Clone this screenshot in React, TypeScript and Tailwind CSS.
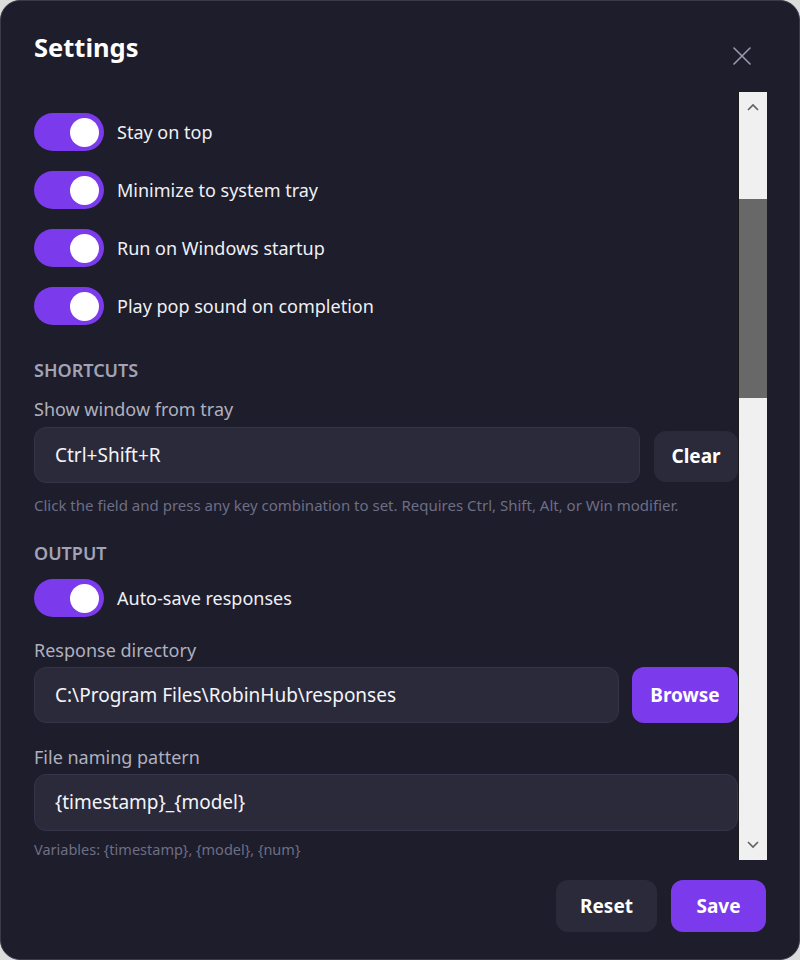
import React from "react";

const font = { fontFamily: '"Noto Sans", "Open Sans", sans-serif' };

function Toggle() {
  return (
    <div className="w-[70px] h-[38px] rounded-full bg-[#7c3aed] flex items-center justify-end pr-[5px] shrink-0">
      <div className="w-[29px] h-[29px] rounded-full bg-white" />
    </div>
  );
}

function ToggleRow({ label }: { label: string }) {
  return (
    <div className="flex items-center gap-[13px]">
      <Toggle />
      <span className="text-[18px] text-[#f0f0f4] leading-[24px]">{label}</span>
    </div>
  );
}

function Section({ children }: { children: React.ReactNode }) {
  return <div className="text-[18px] font-semibold text-[#a3a3b5] leading-[24px]">{children}</div>;
}

function FieldLabel({ children }: { children: React.ReactNode }) {
  return <div className="text-[18px] text-[#b0b0be] leading-[24px]">{children}</div>;
}

function Input({ value, className = "" }: { value: string; className?: string }) {
  return (
    <div
      className={
        "h-[56px] rounded-[12px] bg-[#2a2a3b] border border-[#34344a] flex items-center pl-[20px] text-[19px] text-[#f4f4f8] " +
        className
      }
    >
      {value}
    </div>
  );
}

function Help({ children, className = "" }: { children: React.ReactNode; className?: string }) {
  return <div className={"text-[#6e6e84] leading-[18px] " + className}>{children}</div>;
}

export default function App() {
  return (
    <div className="w-[800px] h-[960px] bg-[#dcdcdc]" style={font}>
      <div className="w-[800px] h-[960px] rounded-[20px] bg-[#1d1d2c] border border-[#3a3a48] flex flex-col">
        <div className="flex items-start justify-between pl-[33px] pr-[48px] pt-[28px] h-[91px]">
          <h1 className="text-[25.5px] font-bold text-white leading-[36px]">Settings</h1>
          <svg width="18" height="18" viewBox="0 0 18 18" className="mt-[18px]">
            <path d="M1 1L17 17M17 1L1 17" stroke="#9a9aab" strokeWidth="1.6" strokeLinecap="round" />
          </svg>
        </div>
        <div className="flex h-[768px] pl-[33px] pr-[32px]">
          <div className="flex-1 overflow-hidden pt-[21px] flex flex-col">
            <div className="flex flex-col gap-[20px]">
              <ToggleRow label="Stay on top" />
              <ToggleRow label="Minimize to system tray" />
              <ToggleRow label="Run on Windows startup" />
              <ToggleRow label="Play pop sound on completion" />
            </div>
            <div className="mt-[33px]">
              <Section>SHORTCUTS</Section>
            </div>
            <div className="mt-[15px]">
              <FieldLabel>Show window from tray</FieldLabel>
            </div>
            <div className="mt-[6px] flex items-center gap-[14px]">
              <Input value="Ctrl+Shift+R" className="flex-1" />
              <button className="w-[84px] h-[51px] mt-[3px] rounded-[12px] bg-[#2a2a3b] text-[19px] font-bold text-white">
                Clear
              </button>
            </div>
            <div className="mt-[13px]">
              <Help className="text-[15px]">
                Click the field and press any key combination to set. Requires Ctrl, Shift, Alt, or Win modifier.
              </Help>
            </div>
            <div className="mt-[27px]">
              <Section>OUTPUT</Section>
            </div>
            <div className="mt-[14px]">
              <ToggleRow label="Auto-save responses" />
            </div>
            <div className="mt-[21px]">
              <FieldLabel>Response directory</FieldLabel>
            </div>
            <div className="mt-[5px] flex items-center gap-[13px]">
              <Input value="C:\Program Files\RobinHub\responses" className="flex-1" />
              <button className="w-[106px] h-[56px] rounded-[12px] bg-[#7c3aed] text-[19px] font-bold text-white">
                Browse
              </button>
            </div>
            <div className="mt-[22px]">
              <FieldLabel>File naming pattern</FieldLabel>
            </div>
            <div className="mt-[5px]">
              <Input value="{timestamp}_{model}" className="h-[57px]" />
            </div>
            <div className="mt-[9px]">
              <Help className="text-[14.5px]">Variables: {"{timestamp}"}, {"{model}"}, {"{num}"}</Help>
            </div>
          </div>
          <div className="w-[29px] shrink-0 bg-[#f0f0f0] border-l border-[#1a1a1a] flex flex-col">
            <div className="h-[30px] flex items-center justify-center">
              <svg width="12" height="8" viewBox="0 0 12 8">
                <path d="M1 7L6 2L11 7" stroke="#606060" strokeWidth="1.6" fill="none" />
              </svg>
            </div>
            <div className="h-[77px]" />
            <div className="h-[199px] bg-[#686868]" />
            <div className="flex-1" />
            <div className="h-[30px] flex items-center justify-center">
              <svg width="12" height="8" viewBox="0 0 12 8">
                <path d="M1 1L6 6L11 1" stroke="#606060" strokeWidth="1.6" fill="none" />
              </svg>
            </div>
          </div>
        </div>
        <div className="flex justify-end gap-[14px] pr-[33px] pt-[20px]">
          <button className="w-[101px] h-[52px] rounded-[12px] bg-[#2a2a3b] text-[19px] font-bold text-white">
            Reset
          </button>
          <button className="w-[95px] h-[52px] rounded-[12px] bg-[#7c3aed] text-[19px] font-bold text-white">
            Save
          </button>
        </div>
      </div>
    </div>
  );
}
